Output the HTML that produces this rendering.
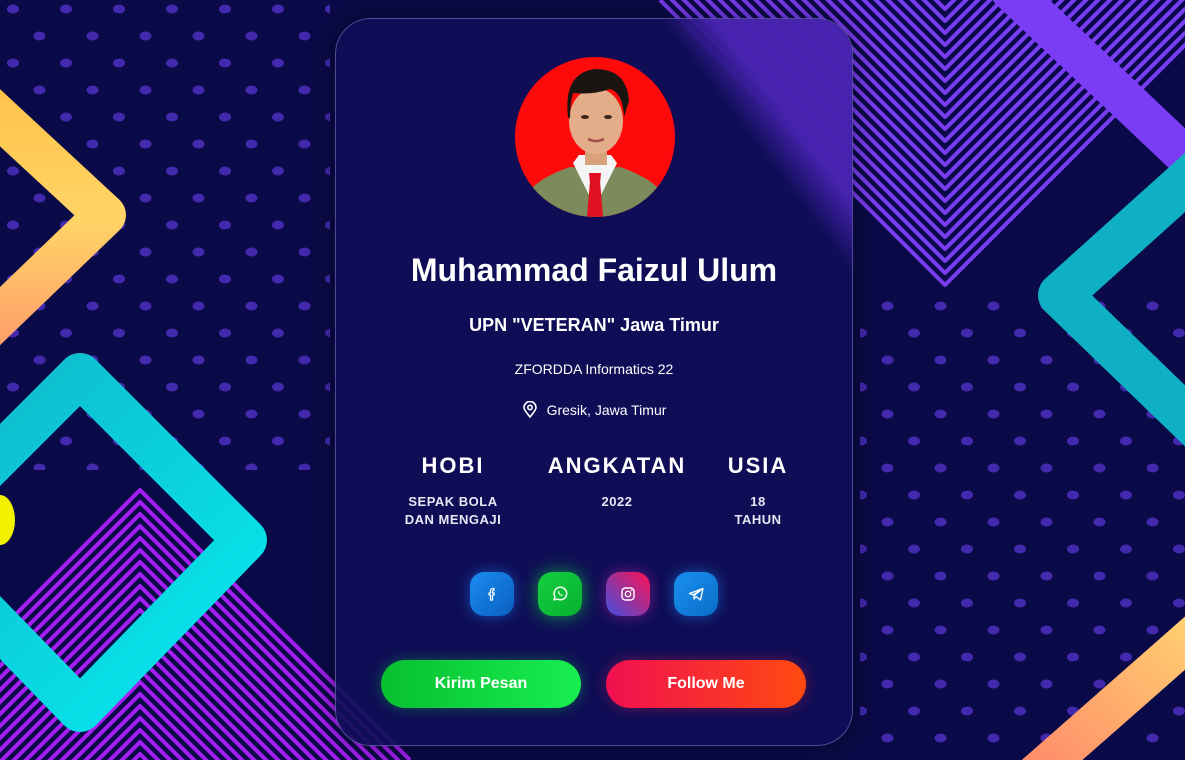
<!DOCTYPE html>
<html><head><meta charset="utf-8">
<style>
html,body{margin:0;padding:0;width:1185px;height:760px;overflow:hidden;background:#0b0a48;font-family:"Liberation Sans",sans-serif;}
#bg{position:absolute;left:0;top:0}
.card{position:absolute;left:335px;top:18px;width:516px;height:726px;border-radius:36px;border:1px solid rgba(160,150,230,0.45);background:rgba(16,14,88,0.92);overflow:hidden;color:#fff;text-align:center;box-shadow:0 0 30px rgba(0,0,0,0.4)}
.glow{position:absolute;left:0;top:0;width:516px;height:726px;background:linear-gradient(53deg,rgba(80,38,190,0) 82%,rgba(80,38,190,0.85) 87%);}
.avatar{position:absolute;left:179px;top:38px;width:160px;height:160px;border-radius:50%;overflow:hidden}
.t{position:absolute;left:0;width:100%;white-space:nowrap}
.stat{position:absolute;text-align:center;font-weight:bold}
.stat .h{display:block;font-size:22px;letter-spacing:2px}
.stat p{margin:14px 0 0;font-size:13px;line-height:18px;letter-spacing:0.5px;color:#e8e8f4}
.soc{position:absolute;top:553px;width:44px;height:44px;border-radius:14px;display:flex;align-items:center;justify-content:center}
.btn{position:absolute;top:641px;width:200px;height:48px;border-radius:24px;font-weight:bold;font-size:16px;line-height:48px}
</style></head><body>
<svg id="bg" width="1185" height="760" viewBox="0 0 1185 760">
<defs>
<pattern id="dots" width="53" height="54" patternUnits="userSpaceOnUse">
<ellipse cx="13" cy="9" rx="6" ry="4.5" fill="#4329ad"/>
<ellipse cx="39.5" cy="36" rx="6" ry="4.5" fill="#4329ad"/>
</pattern>
<linearGradient id="yo" x1="0" y1="0" x2="0" y2="1"><stop offset="0" stop-color="#ffc24a"/><stop offset="0.5" stop-color="#ffd566"/><stop offset="1" stop-color="#ff9e6a"/></linearGradient>
<linearGradient id="cy" x1="0" y1="0" x2="1" y2="1"><stop offset="0" stop-color="#10b5c8"/><stop offset="1" stop-color="#05eaf0"/></linearGradient>
<linearGradient id="or" x1="0" y1="1" x2="1" y2="0"><stop offset="0" stop-color="#ff8a6a"/><stop offset="1" stop-color="#ffd070"/></linearGradient>
<polyline id="vt" points="660,0 945,285 1230,0" fill="none" stroke="#7a3cf0" stroke-width="4" stroke-linejoin="round"/>
<polyline id="vb" points="-130,760 140,490 410,760" fill="none" stroke="#a51ff2" stroke-width="4" stroke-linejoin="round"/>
</defs>
<rect width="1185" height="760" fill="#0b0a48"/>
<rect x="0" y="0" width="330" height="470" fill="url(#dots)"/>
<rect x="860" y="300" width="325" height="460" fill="url(#dots)"/>
<g>
<use href="#vt"/><use href="#vt" y="-12"/><use href="#vt" y="-24"/><use href="#vt" y="-36"/><use href="#vt" y="-48"/><use href="#vt" y="-60"/><use href="#vt" y="-72"/><use href="#vt" y="-84"/><use href="#vt" y="-96"/><use href="#vt" y="-108"/><use href="#vt" y="-120"/><use href="#vt" y="-132"/><use href="#vt" y="-144"/><use href="#vt" y="-156"/><use href="#vt" y="-168"/><use href="#vt" y="-180"/><use href="#vt" y="-192"/><use href="#vt" y="-204"/><use href="#vt" y="-216"/><use href="#vt" y="-228"/><use href="#vt" y="-240"/><use href="#vt" y="-252"/><use href="#vt" y="-264"/><use href="#vt" y="-276"/>
</g>
<g>
<use href="#vb"/><use href="#vb" y="12"/><use href="#vb" y="24"/><use href="#vb" y="36"/><use href="#vb" y="48"/><use href="#vb" y="60"/><use href="#vb" y="72"/><use href="#vb" y="84"/><use href="#vb" y="96"/><use href="#vb" y="108"/><use href="#vb" y="120"/><use href="#vb" y="132"/><use href="#vb" y="144"/><use href="#vb" y="156"/><use href="#vb" y="168"/><use href="#vb" y="180"/><use href="#vb" y="192"/><use href="#vb" y="204"/><use href="#vb" y="216"/><use href="#vb" y="228"/><use href="#vb" y="240"/><use href="#vb" y="252"/><use href="#vb" y="264"/>
</g>
<polyline points="1010,-10 1200,170" stroke="#7b3cf5" stroke-width="40" fill="none" stroke-linecap="round"/>
<polyline points="-30,90 105,215 -30,345" stroke="url(#yo)" stroke-width="42" fill="none" stroke-linejoin="round"/>
<polygon points="80,375 245,540 80,710 -85,540" stroke="url(#cy)" stroke-width="44" fill="none" stroke-linejoin="round"/>
<ellipse cx="0" cy="520" rx="15" ry="25" fill="#f2f200"/>
<polyline points="1210,160 1060,295 1210,440" stroke="#10b0c4" stroke-width="44" fill="none" stroke-linejoin="round"/>
<polyline points="1035,775 1200,630" stroke="url(#or)" stroke-width="40" fill="none"/>
</svg>

<div class="card">
<div class="glow"></div>
<div class="avatar">
<svg width="160" height="160" viewBox="0 0 160 160">
<rect width="160" height="160" fill="#ff0a0a"/>
<path d="M10 140 Q20 122 55 110 L80 112 L105 110 Q140 122 150 140 L150 160 L10 160Z" fill="#7c8a5c"/>
<path d="M58 106 L80 150 L102 106 L96 98 L64 98Z" fill="#f4f4f4"/>
<path d="M75 124 L85 124 L88 160 L72 160Z" fill="#e01020"/>
<path d="M74 116 L86 116 L85 126 L75 126Z" fill="#e01020"/>
<rect x="70" y="88" width="22" height="20" fill="#d9a27c"/>
<ellipse cx="81" cy="64" rx="27" ry="33" fill="#e2ad88"/>
<path d="M53 60 Q48 16 80 12 Q112 12 114 44 L109 60 Q108 36 95 32 Q78 38 58 36 Q55 46 55 62Z" fill="#1b1512"/>
<ellipse cx="70" cy="60" rx="4" ry="2" fill="#3a2418"/>
<ellipse cx="93" cy="60" rx="4" ry="2" fill="#3a2418"/>
<path d="M73 82 Q81 86 89 82" stroke="#a0504a" stroke-width="2.5" fill="none"/>
</svg>
</div>
<div class="t" style="top:233px;font-size:32px;font-weight:bold">Muhammad Faizul Ulum</div>
<div class="t" style="top:296px;font-size:18px;font-weight:bold">UPN "VETERAN" Jawa Timur</div>
<div class="t" style="top:342px;font-size:14px">ZFORDDA Informatics 22</div>
<div class="t" style="top:382px;font-size:14px"><svg width="16" height="17" viewBox="0 0 16 17" style="vertical-align:-3px;margin-right:9px"><path d="M8 16 C3 10 2 8 2 6.5 A6 6 0 0 1 14 6.5 C14 8 13 10 8 16Z" fill="none" stroke="#fff" stroke-width="1.6"/><circle cx="8" cy="6.5" r="2.2" fill="none" stroke="#fff" stroke-width="1.6"/></svg>Gresik, Jawa Timur</div>
<div class="stat" style="left:57px;width:120px;top:434px"><span class="h">HOBI</span><p>SEPAK BOLA<br>DAN MENGAJI</p></div>
<div class="stat" style="left:201px;width:160px;top:434px"><span class="h">ANGKATAN</span><p>2022</p></div>
<div class="stat" style="left:382px;width:80px;top:434px"><span class="h">USIA</span><p>18<br>TAHUN</p></div>

<div class="soc" style="left:134px;background:linear-gradient(135deg,#1a8cf0,#0a5fc0);box-shadow:0 0 14px rgba(30,140,255,0.5)"><svg width="16" height="16" viewBox="0 0 16 16"><path d="M10 2.5 H8.8 A2.3 2.3 0 0 0 6.5 4.8 V7 H5 V9 H6.5 V14 H8.5 V9 H10 L10.3 7 H8.5 V5.2 A0.7 0.7 0 0 1 9.2 4.5 H10Z" fill="none" stroke="#fff" stroke-width="1.2" stroke-linejoin="round"/></svg></div>
<div class="soc" style="left:202px;background:linear-gradient(135deg,#14d040,#08b030);box-shadow:0 0 18px rgba(20,230,60,0.6)"><svg width="18" height="18" viewBox="0 0 18 18"><path d="M3 15 L4 11.8 A6.3 6.3 0 1 1 6.3 14 Z" fill="none" stroke="#fff" stroke-width="1.4" stroke-linejoin="round"/><path d="M7 6.5 Q7 10 11 11 L11.8 10 L10.5 9.3 L10 9.8 Q8.5 9 8.2 7.8 L8.7 7.2 L8 6 Z" fill="#fff"/></svg></div>
<div class="soc" style="left:270px;background:linear-gradient(225deg,#ff1050,#4050e0);box-shadow:0 0 14px rgba(200,40,180,0.5)"><svg width="16" height="16" viewBox="0 0 16 16"><rect x="2" y="2" width="12" height="12" rx="3.5" fill="none" stroke="#fff" stroke-width="1.4"/><circle cx="8" cy="8" r="2.7" fill="none" stroke="#fff" stroke-width="1.4"/><circle cx="11.6" cy="4.4" r="0.8" fill="#fff"/></svg></div>
<div class="soc" style="left:338px;background:linear-gradient(135deg,#1a90f0,#0a6ec8);box-shadow:0 0 14px rgba(30,150,255,0.5)"><svg width="17" height="16" viewBox="0 0 17 16"><path d="M1.5 7.5 L15 2.5 L12.5 14 L8 10.5 L6 13 L6 9.5 L13 4 L5 8.8 Z" fill="none" stroke="#fff" stroke-width="1.3" stroke-linejoin="round"/></svg></div>

<div class="btn" style="left:45px;background:linear-gradient(90deg,#08c030,#18ee50);box-shadow:0 0 14px rgba(20,220,60,0.35)">Kirim Pesan</div>
<div class="btn" style="left:270px;background:linear-gradient(90deg,#f01050,#ff4a10);box-shadow:0 0 14px rgba(255,40,60,0.35)">Follow Me</div>
</div>
</body></html>
